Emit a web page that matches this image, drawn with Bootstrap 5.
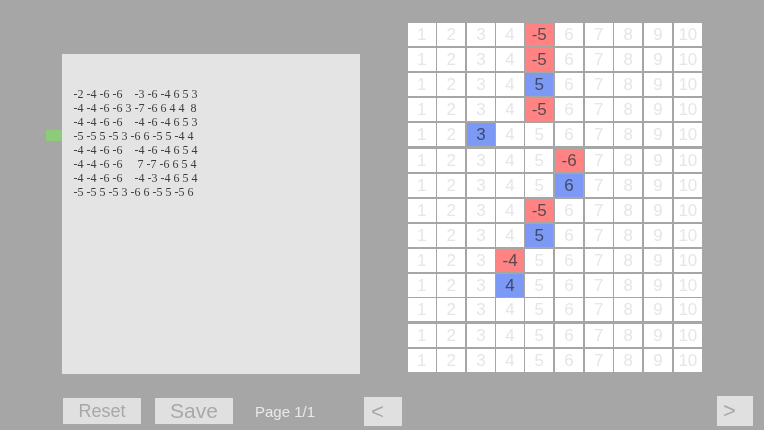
<!DOCTYPE html>
<html lang="en"><head><meta charset="utf-8"><title>Grid</title>
<link href="https://cdn.jsdelivr.net/npm/bootstrap@5.3.0/dist/css/bootstrap.min.css" rel="stylesheet">
<style>
html,body{height:430px;overflow:hidden}
body{background:#a6a6a6;font-family:"Liberation Sans",Arial,sans-serif;width:764px}
.scene{filter:blur(.35px)}
.stage{height:396px;padding-left:46px}
.marker{width:16px;height:11px;background:#8ccb78;margin-top:130px}
.sheet{width:298px;height:320px;margin-top:54px;background:#e4e4e4;padding:33px 0 0 11.5px;font:12px/14px "Liberation Serif","Times New Roman",serif;color:#3c3c3c;white-space:pre}
.board{margin:23px 0 0 47.5px;width:295px;display:grid;grid-template-columns:29.5px 29.7px 29.2px 29.2px 29.8px 29.8px 29.4px 29.8px 29.8px 28px;grid-template-rows:24.5px 25.5px 25px 24.5px 26.5px 25px 25px 25px 25px 25px 24px 26px 24.5px 23px}
.tile{height:23px;width:28.4px;background:#fff;color:#e6e6e6;font-size:17px;line-height:23px;text-align:center}
.neg{background:#ff8383;color:#5a4a4e}
.pos{background:#7b99f5;color:#3f4a6b}
.footbar{height:34px}
.pad{background:#e0e0e0;color:#a8a8a8;border:0;padding:0;text-align:center;border-radius:0}
.reset{width:78px;height:26px;margin:2px 0 0 63px;font-size:18px;line-height:26px}
.save{width:78px;height:26px;margin:2px 0 0 14px;font-size:21px;line-height:26px}
.pageinfo{margin:3px 0 0 22px;width:61px;color:#e9e9e9;font-size:15px;line-height:26px;white-space:nowrap}
.prev{width:38px;height:29px;margin:1px 0 0 48px;font-size:22px;line-height:24px;text-align:left;padding-left:7px}
.next{width:36px;height:30px;margin:0 0 0 315px;font-size:22px;line-height:24px;text-align:left;padding-left:6px}
</style></head><body>
<div class="scene">
<div class="stage d-flex align-items-start">
<div class="marker"></div>
<div class="sheet">-2 -4 -6 -6    -3 -6 -4 6 5 3
-4 -4 -6 -6 3 -7 -6 6 4 4  8
-4 -4 -6 -6    -4 -6 -4 6 5 3
-5 -5 5 -5 3 -6 6 -5 5 -4 4
-4 -4 -6 -6    -4 -6 -4 6 5 4
-4 -4 -6 -6     7 -7 -6 6 5 4
-4 -4 -6 -6    -4 -3 -4 6 5 4
-5 -5 5 -5 3 -6 6 -5 5 -5 6</div>
<div class="board" id="board"></div>
</div>
<div class="footbar d-flex align-items-start">
<button class="btn pad reset" type="button">Reset</button>
<button class="btn pad save" type="button">Save</button>
<div class="pageinfo">Page 1/1</div>
<button class="btn pad prev" type="button">&lt;</button>
<button class="btn pad next" type="button">&gt;</button>
</div>
</div>
<script>
var marks={"0,4":"-5","1,4":"-5","2,4":"5","3,4":"-5","4,2":"3","5,5":"-6","6,5":"6","7,4":"-5","8,4":"5","9,3":"-4","10,3":"4"};
var h="";
for(var r=0;r<14;r++){for(var c=0;c<10;c++){var m=marks[r+","+c];
h+=m?'<div class="tile '+(m[0]=="-"?"neg":"pos")+'">'+m+'</div>':'<div class="tile">'+(c+1)+'</div>';}}
document.getElementById("board").innerHTML=h;
</script>
<script src="https://cdn.jsdelivr.net/npm/bootstrap@5.3.0/dist/js/bootstrap.bundle.min.js"></script>
</body></html>
